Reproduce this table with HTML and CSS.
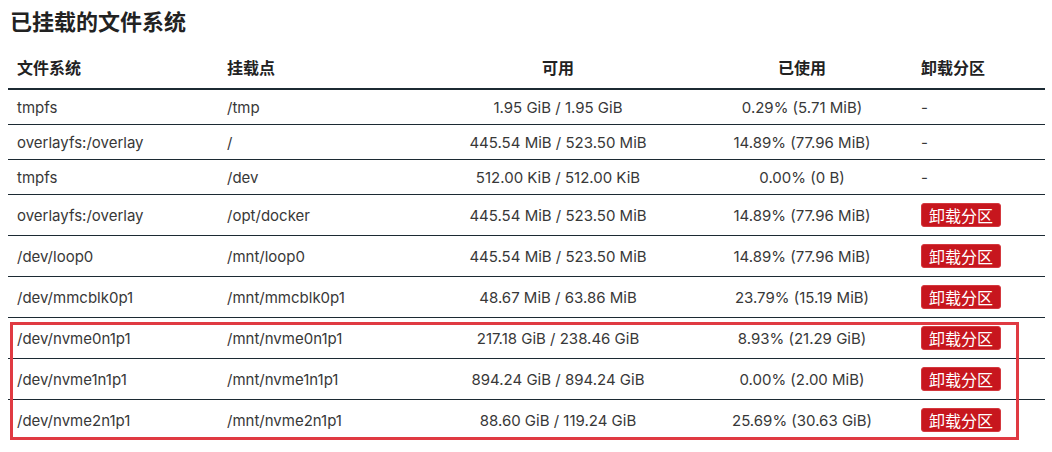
FILE: index.html
```html
<!DOCTYPE html>
<html lang="zh-CN">
<head>
<meta charset="utf-8">
<title>已挂载的文件系统</title>
<link rel="stylesheet" href="styles.css">
</head>
<body>
<div class="page">
  <h2 class="title">已挂载的文件系统</h2>
  <table class="mounts">
    <colgroup>
      <col class="c-fs"><col class="c-mp"><col class="c-av"><col class="c-used"><col class="c-act">
    </colgroup>
    <thead>
      <tr><th>文件系统</th><th>挂载点</th><th class="center">可用</th><th class="center">已使用</th><th>卸载分区</th></tr>
    </thead>
    <tbody>
      <tr><td>tmpfs</td><td>/tmp</td><td class="center">1.95 GiB / 1.95 GiB</td><td class="center">0.29% (5.71 MiB)</td><td>-</td></tr>
      <tr><td>overlayfs:/overlay</td><td>/</td><td class="center">445.54 MiB / 523.50 MiB</td><td class="center">14.89% (77.96 MiB)</td><td>-</td></tr>
      <tr><td>tmpfs</td><td>/dev</td><td class="center">512.00 KiB / 512.00 KiB</td><td class="center">0.00% (0 B)</td><td>-</td></tr>
      <tr class="btn-row"><td>overlayfs:/overlay</td><td>/opt/docker</td><td class="center">445.54 MiB / 523.50 MiB</td><td class="center">14.89% (77.96 MiB)</td><td><button class="unmount">卸载分区</button></td></tr>
      <tr class="btn-row"><td>/dev/loop0</td><td>/mnt/loop0</td><td class="center">445.54 MiB / 523.50 MiB</td><td class="center">14.89% (77.96 MiB)</td><td><button class="unmount">卸载分区</button></td></tr>
      <tr class="btn-row"><td>/dev/mmcblk0p1</td><td>/mnt/mmcblk0p1</td><td class="center">48.67 MiB / 63.86 MiB</td><td class="center">23.79% (15.19 MiB)</td><td><button class="unmount">卸载分区</button></td></tr>
      <tr class="btn-row"><td>/dev/nvme0n1p1</td><td>/mnt/nvme0n1p1</td><td class="center">217.18 GiB / 238.46 GiB</td><td class="center">8.93% (21.29 GiB)</td><td><button class="unmount">卸载分区</button></td></tr>
      <tr class="btn-row"><td>/dev/nvme1n1p1</td><td>/mnt/nvme1n1p1</td><td class="center">894.24 GiB / 894.24 GiB</td><td class="center">0.00% (2.00 MiB)</td><td><button class="unmount">卸载分区</button></td></tr>
      <tr class="btn-row last"><td>/dev/nvme2n1p1</td><td>/mnt/nvme2n1p1</td><td class="center">88.60 GiB / 119.24 GiB</td><td class="center">25.69% (30.63 GiB)</td><td><button class="unmount">卸载分区</button></td></tr>
    </tbody>
  </table>
  <div class="highlight"></div>
</div>
</body>
</html>
```
FILE: styles.css
```css
html, body {
  margin: 0;
  padding: 0;
  background: #ffffff;
}
body {
  font-family: Inter, "Noto Sans CJK SC", sans-serif;
  color: #383838;
}
.page {
  position: relative;
  padding: 0 7px 0 8px;
}
.title {
  margin: 0;
  padding: 9px 0 0 2px;
  height: 45px;
  box-sizing: border-box;
  font-size: 22px;
  font-weight: 700;
  color: #222222;
  line-height: 26px;
}
.mounts {
  width: 1037px;
  border-collapse: collapse;
  table-layout: fixed;
  font-size: 15px;
}
.c-fs { width: 210px; }
.c-mp { width: 206px; }
.c-av { width: 268px; }
.c-used { width: 220px; }
.c-act { width: 133px; }
.mounts th {
  text-align: left;
  font-weight: 700;
  font-size: 16px;
  color: #222222;
  height: 44px;
  padding: 0 9px;
  border-bottom: 2px solid #1c2a33;
  vertical-align: middle;
  box-sizing: border-box;
}
.mounts td {
  height: 35px;
  padding: 1px 9px 0;
  border-bottom: 1px solid #1c2a33;
  vertical-align: middle;
  box-sizing: border-box;
  white-space: nowrap;
}
.mounts tr.btn-row td { height: 41px; }
.mounts tr.last td { border-bottom: none; }
.mounts .center { text-align: center; }
.unmount {
  display: inline-block;
  width: 80px;
  height: 24px;
  padding: 0;
  border: 1px solid #d4383e;
  border-radius: 3px;
  background: #c7161e;
  color: #ffffff;
  font-family: "Noto Sans CJK SC", sans-serif;
  font-size: 16px;
  line-height: 22px;
  vertical-align: middle;
  cursor: pointer;
}
.highlight {
  position: absolute;
  left: 10px;
  top: 322px;
  width: 1009px;
  height: 118px;
  border: 3px solid #e03a42;
  box-sizing: border-box;
  pointer-events: none;
}
```
